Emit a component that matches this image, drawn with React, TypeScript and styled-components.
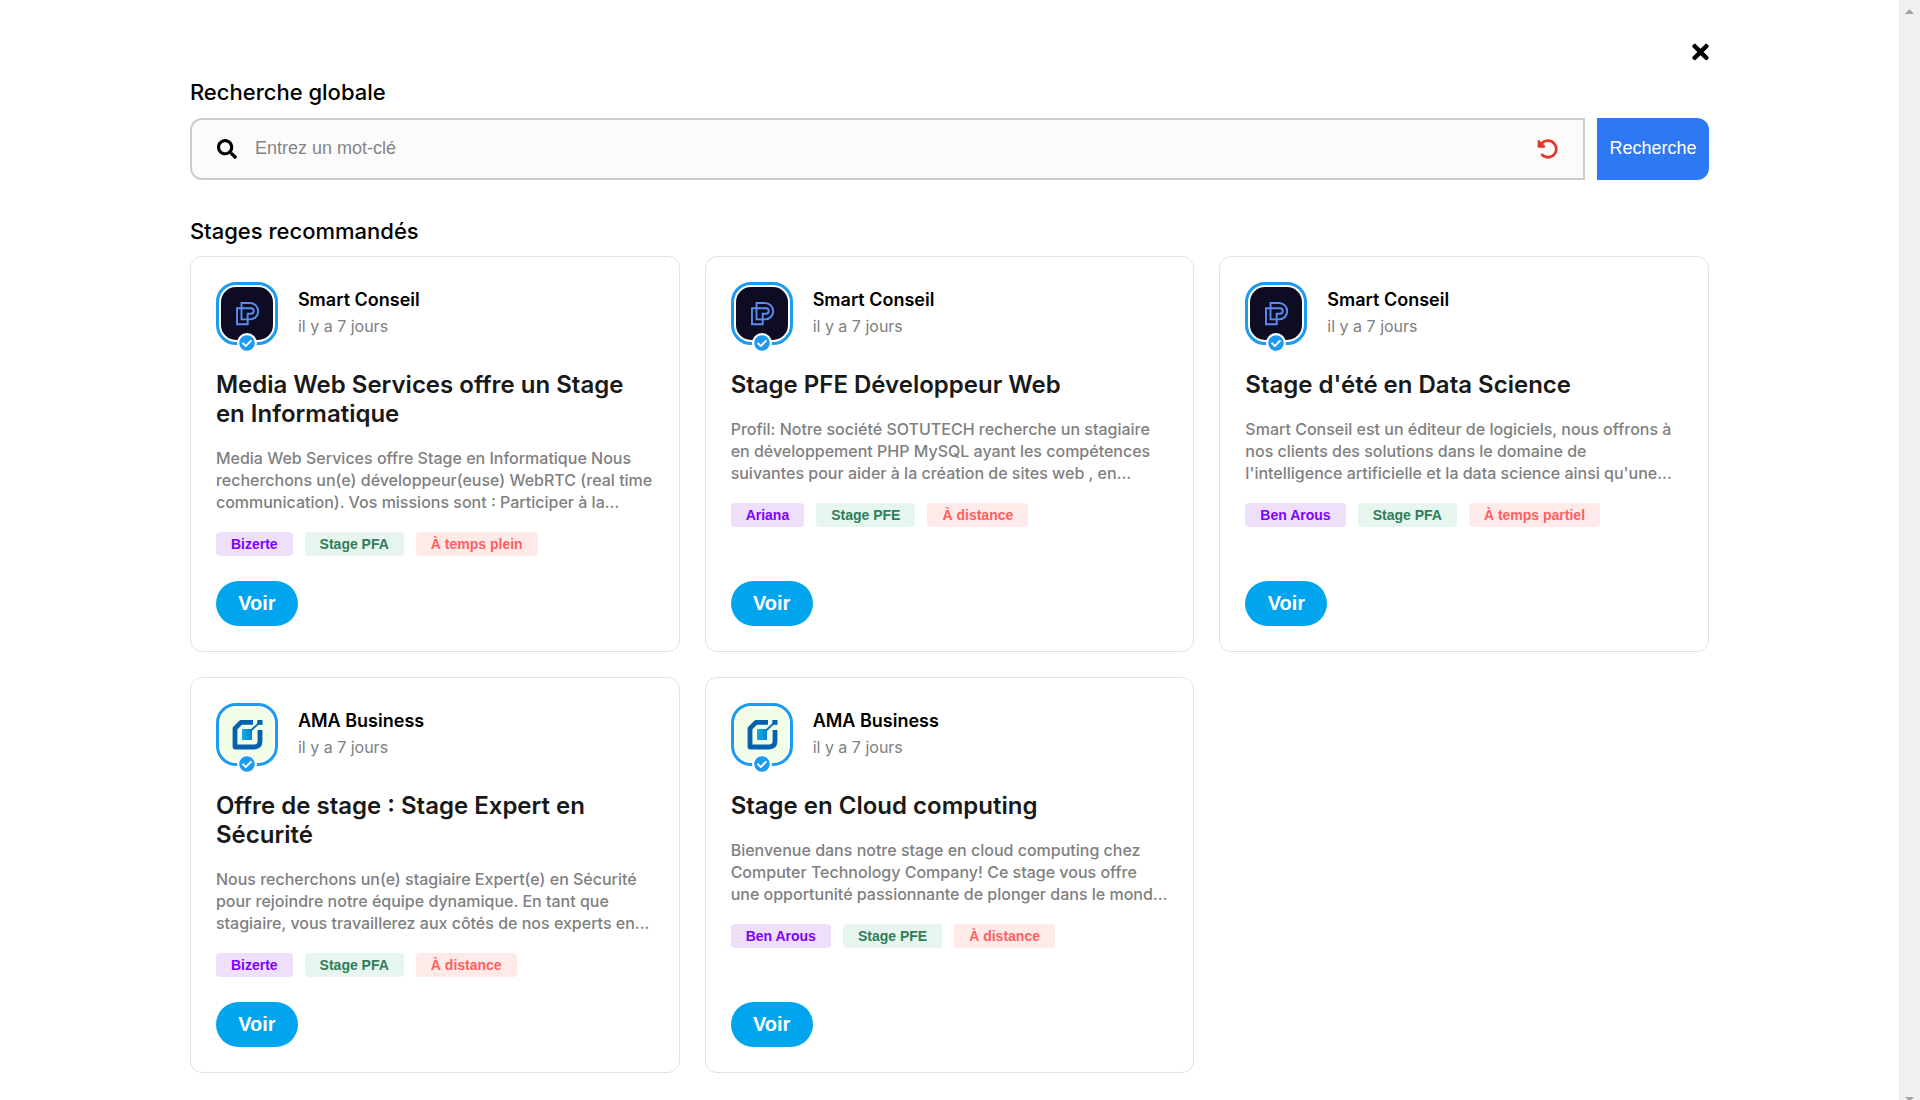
import React from "react";
import styled, { createGlobalStyle } from "styled-components";
import { FaSearch, FaTimes, FaCheckCircle } from "react-icons/fa";
import { FaRotateLeft } from "react-icons/fa6";

const GlobalStyle = createGlobalStyle`
  *, *::before, *::after { box-sizing: border-box; }
  html, body { margin: 0; padding: 0; }
  html { overflow: hidden; }
  body { background: #fff; color: #000; font-family: Inter, sans-serif; }
  h2, h3, h4, p { margin: 0; }
`;

const arial = `"Liberation Sans", Arial, sans-serif`;

const Screen = styled.div`
  display: flex;
  height: 100vh;
  overflow: hidden;
`;

const Page = styled.main`
  flex: 1;
  min-width: 0;
`;

const Content = styled.div`
  width: 80%;
  margin: 0 auto;
  padding: 40px 0 28px;
`;

const ScrollTrack = styled.div`
  display: flex;
  flex-direction: column;
  justify-content: space-between;
  align-items: center;
  flex: none;
  width: 21px;
  padding: 9px 0 0;
  background: #f0f0f0;
`;

const TopBar = styled.div`
  display: flex;
  justify-content: flex-end;
  height: 24px;
`;

const IconButton = styled.button<{ $color: string; $width: number; $height: number }>`
  display: flex;
  align-items: center;
  justify-content: center;
  padding: 0;
  border: 0;
  background: none;
  color: ${(p) => p.$color};
  cursor: pointer;
  svg {
    display: block;
    width: ${(p) => p.$width}px;
    height: ${(p) => p.$height}px;
  }
`;

const Heading = styled.h2`
  margin-top: 15px;
  font-size: 22px;
  line-height: 26px;
  font-weight: 500;
`;

const SearchForm = styled.form`
  display: flex;
  gap: 12px;
  height: 62px;
  margin: 13px 0 38px;
`;

const SearchField = styled.label`
  display: flex;
  align-items: center;
  flex: 1;
  gap: 18px;
  padding: 0 24px 0 25px;
  border: 2px solid #ccc;
  border-radius: 12px 0 0 12px;
  background: #fbfbfb;
  font-size: 20px;
`;

const SearchInput = styled.input`
  flex: 1;
  min-width: 0;
  padding: 0 0 2px;
  border: 0;
  outline: 0;
  background: transparent;
  font: 18px/20px ${arial};
  &::placeholder { color: #858585; opacity: 1; }
`;

const SearchButton = styled.button`
  width: 112px;
  padding: 0 0 2px;
  border: 0;
  border-radius: 0 12px 12px 0;
  background: #2d79f3;
  color: #fff;
  font: 18px/20px ${arial};
  cursor: pointer;
`;

const Grid = styled.div`
  display: grid;
  grid-template-columns: repeat(3, minmax(0, 1fr));
  gap: 25px;
  margin-top: 12px;
`;

const Card = styled.article`
  display: flex;
  flex-direction: column;
  align-items: flex-start;
  min-height: 396px;
  padding: 25px;
  border: 1px solid #e2e2e2;
  border-radius: 12px;
`;

const Company = styled.header`
  display: flex;
  gap: 20px;
`;

const Avatar = styled.div`
  position: relative;
  width: 62px;
  height: 63px;
  padding: 2px;
  border: 3px solid #1d9bf0;
  border-radius: 20px;
`;

const Logo = styled.div<{ $bg: string }>`
  height: 53px;
  border-radius: 15px;
  overflow: hidden;
  background: ${(p) => p.$bg};
  svg { display: block; width: 100%; height: 100%; }
`;

const Verified = styled.span`
  position: absolute;
  left: 50%;
  bottom: -11px;
  display: flex;
  padding: 2px;
  border-radius: 50%;
  background: #fff;
  color: #1d9bf0;
  font-size: 16px;
  transform: translateX(-50%);
`;

const CompanyText = styled.div`
  padding-top: 7px;
`;

const CompanyName = styled.h4`
  font-size: 18px;
  line-height: 22px;
  font-weight: 600;
`;

const Age = styled.p`
  margin-top: 5px;
  color: #808080;
  font-size: 16px;
  line-height: 20px;
`;

const Title = styled.h3`
  margin-top: 25px;
  color: #191919;
  font-size: 24px;
  line-height: 29px;
  font-weight: 600;
`;

const Description = styled.p`
  display: -webkit-box;
  -webkit-box-orient: vertical;
  -webkit-line-clamp: 3;
  overflow: hidden;
  margin-top: 19px;
  color: #808080;
  font-size: 16px;
  line-height: 22px;
  font-weight: 500;
`;

const Tags = styled.div`
  display: flex;
  gap: 12px;
  margin-top: 19px;
`;

const Tag = styled.span<{ $bg: string; $color: string }>`
  padding: 3px 15px;
  border-radius: 4px;
  background: ${(p) => p.$bg};
  color: ${(p) => p.$color};
  font: bold 14px/18px ${arial};
`;

const ViewButton = styled.button`
  min-width: 82px;
  height: 45px;
  margin-top: auto;
  padding: 0 22px 2px;
  border: 0;
  border-radius: 23px;
  background: #00a5ee;
  color: #fff;
  font: bold 20px/22px ${arial};
  cursor: pointer;
`;

const SmartLogo = () => (
  <svg viewBox="0 0 52 53" aria-hidden="true" fill="none" stroke="#5b8def" strokeWidth="1.9">
    <path d="M20.500 16H29a8.200 8.200 0 0 1 0 16.400h-8.500z" />
    <path d="M16 21.300h14a2.700 2.700 0 0 1 0 5.400h-3.300V37.300H16z" />
  </svg>
);

const AmaLogo = () => (
  <svg viewBox="0 0 52 53" aria-hidden="true">
    <defs>
      <linearGradient id="amaCore" x1="0" x2="1">
        <stop offset="0" stopColor="#06aeea" />
        <stop offset="1" stopColor="#0585cc" />
      </linearGradient>
    </defs>
    <path d="M32 14.400H20l-6 6V39H33q6 0 6-6V22" fill="none" stroke="#0560ae" strokeWidth="4.800" strokeLinejoin="round" />
    <rect x="21" y="21" width="10" height="11" rx="1" fill="url(#amaCore)" />
    <path d="M29.500 23L38 15" stroke="#0571b8" strokeWidth="1.800" />
    <rect x="36.300" y="12" width="5.200" height="4.800" fill="#0560ae" />
  </svg>
);

type Offer = {
  company: "Smart Conseil" | "AMA Business";
  title: string;
  text: string;
  city: string;
  kind: string;
  mode: string;
};

const offers: Offer[] = [
  {
    company: "Smart Conseil",
    title: "Media Web Services offre un Stage en Informatique",
    text: "Media Web Services offre Stage en Informatique Nous recherchons un(e) développeur(euse) WebRTC (real time communication). Vos missions sont : Participer à la...",
    city: "Bizerte", kind: "Stage PFA", mode: "À temps plein",
  },
  {
    company: "Smart Conseil",
    title: "Stage PFE Développeur Web",
    text: "Profil: Notre société SOTUTECH recherche un stagiaire en développement PHP MySQL ayant les compétences suivantes pour aider à la création de sites web , en...",
    city: "Ariana", kind: "Stage PFE", mode: "À distance",
  },
  {
    company: "Smart Conseil",
    title: "Stage d'été en Data Science",
    text: "Smart Conseil est un éditeur de logiciels, nous offrons à nos clients des solutions dans le domaine de l'intelligence artificielle et la data science ainsi qu'une...",
    city: "Ben Arous", kind: "Stage PFA", mode: "À temps partiel",
  },
  {
    company: "AMA Business",
    title: "Offre de stage : Stage Expert en Sécurité",
    text: "Nous recherchons un(e) stagiaire Expert(e) en Sécurité pour rejoindre notre équipe dynamique. En tant que stagiaire, vous travaillerez aux côtés de nos experts en...",
    city: "Bizerte", kind: "Stage PFA", mode: "À distance",
  },
  {
    company: "AMA Business",
    title: "Stage en Cloud computing",
    text: "Bienvenue dans notre stage en cloud computing chez Computer Technology Company! Ce stage vous offre une opportunité passionnante de plonger dans le mond...",
    city: "Ben Arous", kind: "Stage PFE", mode: "À distance",
  },
];

const OfferCard = ({ offer }: { offer: Offer }) => {
  const smart = offer.company === "Smart Conseil";
  return (
    <Card>
      <Company>
        <Avatar>
          <Logo $bg={smart ? "#0d0c22" : "#f1fde6"}>{smart ? <SmartLogo /> : <AmaLogo />}</Logo>
          <Verified><FaCheckCircle /></Verified>
        </Avatar>
        <CompanyText>
          <CompanyName>{offer.company}</CompanyName>
          <Age>il y a 7 jours</Age>
        </CompanyText>
      </Company>
      <Title>{offer.title}</Title>
      <Description>{offer.text}</Description>
      <Tags>
        <Tag $bg="#eee0fa" $color="#7f00ff">{offer.city}</Tag>
        <Tag $bg="#e6f6ee" $color="#2f7d5b">{offer.kind}</Tag>
        <Tag $bg="#ffeaea" $color="#ff5f5f">{offer.mode}</Tag>
      </Tags>
      <ViewButton type="button">Voir</ViewButton>
    </Card>
  );
};

export default function App() {
  return (
    <Screen>
      <GlobalStyle />
      <Page>
        <Content>
          <TopBar>
            <IconButton type="button" aria-label="Fermer" $color="#000" $width={17} $height={24}><FaTimes /></IconButton>
          </TopBar>
          <Heading>Recherche globale</Heading>
          <SearchForm onSubmit={(e) => e.preventDefault()}>
            <SearchField>
              <FaSearch />
              <SearchInput type="text" placeholder="Entrez un mot-clé" aria-label="Recherche globale" />
              <IconButton type="reset" aria-label="Réinitialiser" $color="#e8352a" $width={22} $height={22}><FaRotateLeft /></IconButton>
            </SearchField>
            <SearchButton type="submit">Recherche</SearchButton>
          </SearchForm>
          <Heading>Stages recommandés</Heading>
          <Grid>
            {offers.map((offer) => <OfferCard key={offer.title} offer={offer} />)}
          </Grid>
        </Content>
      </Page>
      <ScrollTrack aria-hidden="true">
        <svg width="9" height="5" viewBox="0 0 9 5"><path d="M0 5L4.500 0L9 5z" fill="#a3a3a3" /></svg>
        <svg width="9" height="3" viewBox="0 0 9 3"><path d="M0 0h9L6 3H3z" fill="#a3a3a3" /></svg>
      </ScrollTrack>
    </Screen>
  );
}
